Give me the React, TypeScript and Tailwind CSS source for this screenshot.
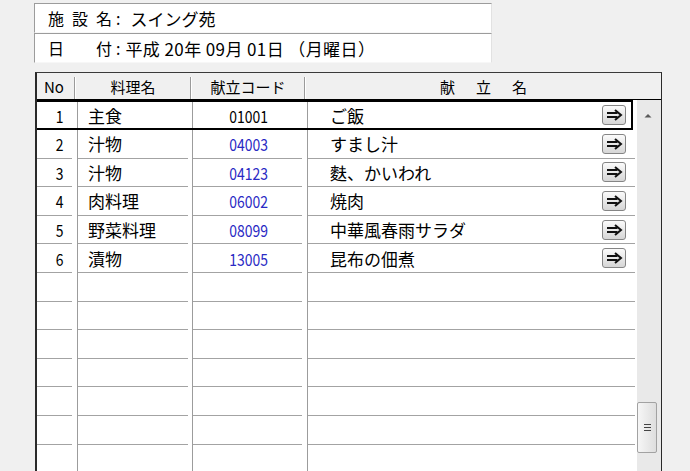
import type { ReactNode } from 'react';

type MenuRow = {
  no: number;
  category: string;
  code: string;
  name: string;
};

const menuRows: MenuRow[] = [
  { no: 1, category: '主食', code: '01001', name: 'ご飯' },
  { no: 2, category: '汁物', code: '04003', name: 'すまし汁' },
  { no: 3, category: '汁物', code: '04123', name: '麩、かいわれ' },
  { no: 4, category: '肉料理', code: '06002', name: '焼肉' },
  { no: 5, category: '野菜料理', code: '08099', name: '中華風春雨サラダ' },
  { no: 6, category: '漬物', code: '13005', name: '昆布の佃煮' },
];

const EMPTY_ROWS = 7;

// narrow digits, closer to the old bitmap UI font
function Digits({ children, origin }: { children: ReactNode; origin: 'right' | 'center' }) {
  return (
    <span
      className={
        origin === 'right'
          ? 'inline-block origin-right scale-x-[0.82]'
          : 'inline-block origin-center scale-x-[0.82]'
      }
    >
      {children}
    </span>
  );
}

function JumpButton() {
  return (
    <button
      type="button"
      className="flex h-[20px] w-[24px] items-center justify-center rounded-[3px] border border-[#858585] bg-gradient-to-b from-[#fbfbfb] to-[#d6d6d6]"
    >
      <svg width="17" height="12" viewBox="0 0 17 12" fill="none" stroke="#111" strokeWidth="2">
        <path d="M1 4h10.5M1 8h10.5" />
        <path d="M9 1l6 5-6 5" />
      </svg>
    </button>
  );
}

function InfoBox({ children }: { children: ReactNode }) {
  return (
    <div className="flex h-[30px] w-[458px] items-center border-t border-l border-b border-r border-t-[#9c9c9c] border-l-[#9c9c9c] border-b-[#f7f7f7] border-r-[#e2e2e2] bg-white pl-[13px] text-[16px] leading-none">
      {children}
    </div>
  );
}

function SelectedRow({ row }: { row: MenuRow }) {
  return (
    <div className="flex h-[30px] w-[596px] border-y-2 border-r-2 border-black bg-white">
      <div className="flex w-[40px] items-center justify-end pr-[14px]">
        <Digits origin="right">{row.no}</Digits>
      </div>
      <div className="flex w-[115px] items-center border-l border-[#9c9c9c] pl-[10px]">{row.category}</div>
      <div className="flex w-[115px] items-center justify-center border-l border-[#9c9c9c] pr-[3px]">
        <Digits origin="center">{row.code}</Digits>
      </div>
      <div className="flex flex-1 items-center justify-between border-l border-[#9c9c9c] pl-[22px] pr-[5px]">
        <span>{row.name}</span>
        <JumpButton />
      </div>
    </div>
  );
}

function GridRow({ row }: { row?: MenuRow }) {
  return (
    <div className="flex h-[28.6px] w-[600px] bg-white">
      <div className="flex w-[40px] flex-col">
        <div className="flex flex-1 items-center justify-end pr-[14px]">
          {row ? <Digits origin="right">{row.no}</Digits> : null}
        </div>
        <div className="mr-[5px] h-px bg-[#a3a3a3]" />
      </div>
      <div className="flex w-[115px] flex-col border-l border-[#9c9c9c]">
        <div className="flex flex-1 items-center pl-[10px]">{row?.category}</div>
        <div className="mr-[4px] h-px bg-[#a3a3a3]" />
      </div>
      <div className="flex w-[115px] flex-col border-l border-[#9c9c9c]">
        <div className="flex flex-1 items-center justify-center pr-[3px] text-[#2a2ac4]">
          {row ? <Digits origin="center">{row.code}</Digits> : null}
        </div>
        <div className="mr-[5px] h-px bg-[#a3a3a3]" />
      </div>
      <div className="flex flex-1 flex-col border-l border-[#9c9c9c]">
        <div className="flex flex-1 items-center justify-between pl-[22px] pr-[11px]">
          <span>{row?.name}</span>
          {row ? <JumpButton /> : null}
        </div>
        <div className="mr-[2px] h-px bg-[#a3a3a3]" />
      </div>
    </div>
  );
}

function HeaderSep() {
  return <div className="h-[22px] w-[2px] self-end border-l border-r border-l-[#9a9a9a] border-r-white" />;
}

function ScrollTrack() {
  return (
    <div className="flex w-[24px] flex-col bg-[#e9e9e9]">
      <div className="flex h-[30px] items-center justify-center pr-[3px]">
        <svg width="8" height="5" viewBox="0 0 8 5">
          <path d="M0.5 4.5 4 1l3.5 3.5z" fill="#5a5a5a" />
        </svg>
      </div>
      <div className="h-[272px]" />
      <div className="flex h-[51px] w-[20px] items-center justify-center rounded-[2px] border border-[#a2a2a2] bg-gradient-to-r from-[#f6f6f6] to-[#dedede]">
        <div className="flex flex-col gap-[2px]">
          <div className="h-px w-[7px] bg-[#444]" />
          <div className="h-px w-[7px] bg-[#444]" />
          <div className="h-px w-[7px] bg-[#444]" />
        </div>
      </div>
    </div>
  );
}

export default function App() {
  const [first, ...rest] = menuRows;

  return (
    <div className="h-[471px] w-[690px] overflow-hidden bg-[#f0f0f0] font-['Noto_Sans_CJK_JP','Noto_Sans',sans-serif] text-black">
      <div className="pl-[34px] pt-[3px]">
        <InfoBox>
          <span className="flex w-[64px] justify-between">
            <span>施</span>
            <span>設</span>
            <span>名</span>
          </span>
          <span className="pl-[4px] pr-[10px]">:</span>
          <span className="text-[17px]">スイング苑</span>
        </InfoBox>
        <InfoBox>
          <span className="flex w-[64px] justify-between">
            <span>日</span>
            <span>付</span>
          </span>
          <span className="pl-[4px] pr-[5px]">:</span>
          <span className="text-[17px] tracking-[0.4px]">平成 20年 09月 01日 （月曜日）</span>
        </InfoBox>
      </div>

      <div className="ml-[35px] mt-[9px] w-[627px] border-t border-l-2 border-r border-t-[#3a3a3a] border-l-[#2a2a2a] border-r-[#2a2a2a]">
        {/* column headers */}
        <div className="flex h-[27px] border-b border-black bg-[#f0f0f0] text-[15px] leading-none">
          <div className="flex w-[37px] items-center pl-[7px]">No</div>
          <HeaderSep />
          <div className="flex w-[114px] items-center justify-center">料理名</div>
          <HeaderSep />
          <div className="flex w-[112px] items-center justify-center">献立コード</div>
          <HeaderSep />
          <div className="flex flex-1 items-center justify-center gap-[21px]">
            <span>献</span>
            <span>立</span>
            <span>名</span>
          </div>
        </div>

        <div className="flex h-[380px] text-[17px] leading-none">
          <div className="flex w-[600px] flex-col bg-white">
            <SelectedRow row={first} />
            {rest.map((row) => (
              <GridRow key={row.no} row={row} />
            ))}
            {Array.from({ length: EMPTY_ROWS }, (_, i) => (
              <GridRow key={`empty-${i}`} />
            ))}
          </div>
          <ScrollTrack />
        </div>
      </div>
    </div>
  );
}
